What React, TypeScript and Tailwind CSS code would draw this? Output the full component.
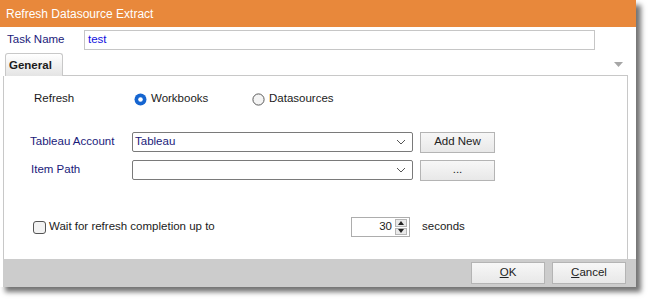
import React from 'react';

const font = "font-['Segoe_UI','Liberation_Sans',sans-serif]";

const Chevron: React.FC = () => (
  <svg width="10" height="6" viewBox="0 0 10 6" className="shrink-0">
    <path d="M1 1 L5 5 L9 1" fill="none" stroke="#555" strokeWidth="1" />
  </svg>
);

const Combo: React.FC<{ value?: string }> = ({ value }) => (
  <div className="w-[281px] h-[20px] border border-[#7a7a7a] rounded-[2px] bg-white flex items-center pl-[2px] pr-[6px]">
    <span className="flex-1 text-[#1a1a7a]">{value}</span>
    <Chevron />
  </div>
);

const Button: React.FC<{ children: React.ReactNode; className?: string }> = ({ children, className }) => (
  <div
    className={`h-[21px] border border-[#b4b4b4] bg-gradient-to-b from-[#f7f7f7] to-[#e8e8e8] flex items-center justify-center text-[#222] ${className ?? ''}`}
  >
    {children}
  </div>
);

const Radio: React.FC<{ checked?: boolean }> = ({ checked }) => (
  <svg width="13" height="13" viewBox="0 0 13 13" className="shrink-0">
    {checked ? (
      <>
        <circle cx="6.5" cy="6.5" r="6" fill="#1565d0" />
        <circle cx="6.5" cy="6.5" r="2.3" fill="#fff" />
      </>
    ) : (
      <circle cx="6.5" cy="6.5" r="5.6" fill="#f4f4f4" stroke="#5a5a5a" strokeWidth="1" />
    )}
  </svg>
);

const App: React.FC = () => {
  return (
    <div className={`w-[650px] h-[305px] bg-white ${font} text-[11.5px]`}>
      <div className="w-[636px] h-[287px] bg-white flex flex-col shadow-[5px_5px_5px_rgba(0,0,0,0.55)]">
        {/* title bar */}
        <div className="h-[27px] bg-[#e8883b] text-white text-[12px] flex items-center pl-[6px] shrink-0">
          Refresh Datasource Extract
        </div>

        {/* task name */}
        <div className="flex items-center mt-[3px] h-[20px] shrink-0">
          <span className="w-[84px] pl-[7px] text-[#1a1a7a]">Task Name</span>
          <div className="w-[511px] h-[20px] border border-[#c6c6c6] flex items-center pl-[3px] text-[#1010e0]">test</div>
        </div>

        {/* tab strip */}
        <div className="flex items-end mt-[3px] h-[23px] shrink-0 pl-[5px] pr-[8px]">
          <div className="w-[58px] h-[23px] border border-b-0 border-[#c8c8c8] rounded-t-[3px] bg-gradient-to-b from-white to-[#e4e4e4] font-bold text-[#1b1b1b] pl-[3px] pt-[3px]">
            General
          </div>
          <div className="flex-1 h-full border-b border-[#c8c8c8] flex justify-end items-start pt-[9px] pr-[5px]">
            <svg width="9" height="5" viewBox="0 0 9 5">
              <path d="M0 0 H9 L4.5 5 Z" fill="#a6a6a6" />
            </svg>
          </div>
        </div>

        {/* panel */}
        <div className="flex-1 ml-[3px] mr-[8px] border-l border-r border-[#c8c8c8] flex flex-col text-[#1b1b1b]">
          <div className="flex items-center h-[16px] mt-[15px]">
            <span className="w-[130px] pl-[30px]">Refresh</span>
            <div className="w-[118px] flex items-center gap-[4px]">
              <Radio checked />
              <span>Workbooks</span>
            </div>
            <div className="flex items-center gap-[4px]">
              <Radio />
              <span>Datasources</span>
            </div>
          </div>

          <div className="flex items-center h-[20px] mt-[25px]">
            <span className="w-[128px] pl-[26px] text-[#1a1a7a]">Tableau Account</span>
            <Combo value="Tableau" />
            <Button className="w-[75px] ml-[7px]">Add New</Button>
          </div>

          <div className="flex items-center h-[20px] mt-[8px]">
            <span className="w-[128px] pl-[27px] text-[#1a1a7a]">Item Path</span>
            <Combo />
            <Button className="w-[75px] ml-[7px]">...</Button>
          </div>

          <div className="flex items-center h-[20px] mt-[37px]">
            <div className="w-[347px] pl-[29px] flex items-center gap-[3px]">
              <div className="w-[13px] h-[13px] border border-[#555] rounded-[3px] bg-[#f2f2f2]" />
              <span>Wait for refresh completion up to</span>
            </div>
            <div className="w-[59px] h-[20px] border border-[#adadad] flex items-center justify-end pr-[2px]">
              <span className="mr-[3px]">30</span>
              <div className="w-[12px] h-[16px] flex flex-col gap-[1px]">
                <div className="flex-1 bg-[#e9e9e9] border border-[#b5b5b5] flex items-center justify-center">
                  <svg width="6" height="4" viewBox="0 0 6 4"><path d="M0 4 H6 L3 0 Z" fill="#222" /></svg>
                </div>
                <div className="flex-1 bg-[#e9e9e9] border border-[#b5b5b5] flex items-center justify-center">
                  <svg width="6" height="4" viewBox="0 0 6 4"><path d="M0 0 H6 L3 4 Z" fill="#222" /></svg>
                </div>
              </div>
            </div>
            <span className="ml-[12px]">seconds</span>
          </div>
        </div>

        {/* footer */}
        <div className="h-[28px] ml-[3px] bg-[#cccccc] flex items-center justify-end pr-[10px] gap-[7px] shrink-0">
          <Button className="w-[74px] h-[22px]">
            <span><span className="underline">O</span>K</span>
          </Button>
          <Button className="w-[74px] h-[22px]">
            <span><span className="underline">C</span>ancel</span>
          </Button>
        </div>
      </div>
    </div>
  );
};

export default App;
